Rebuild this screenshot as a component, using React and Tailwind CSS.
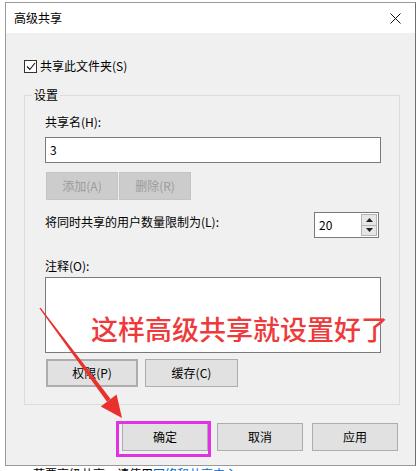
import React from "react";

const Btn = ({ children, className = "" }) => (
  <button
    type="button"
    className={`h-[28px] flex items-center justify-center text-[12px] leading-[16px] text-black bg-[#e1e1e1] border border-[#adadad] ${className}`}
  >
    {children}
  </button>
);

const DisabledBtn = ({ children }) => (
  <button
    type="button"
    className="w-[72px] h-[28px] flex items-center justify-center text-[12px] leading-[16px] text-[#9b9b9b] bg-[#cccccc] border border-[#c4c4c4]"
  >
    {children}
  </button>
);

const Spinner = () => (
  <div className="w-[65px] h-[26px] bg-white border border-[#7a7a7a] flex items-center justify-between pl-[4px] pr-[1px]">
    <span className="text-[12px] leading-[16px]">20</span>
    <div className="flex flex-col w-[16px] h-[22px]">
      <div className="flex-1 flex items-center justify-center bg-[#e6e6e6] border border-[#b4b4b4]">
        <svg width="7" height="4" viewBox="0 0 7 4">
          <path d="M0 4 L3.5 0 L7 4 Z" fill="#202020" />
        </svg>
      </div>
      <div className="flex-1 flex items-center justify-center bg-[#e6e6e6] border border-t-0 border-[#b4b4b4]">
        <svg width="7" height="4" viewBox="0 0 7 4">
          <path d="M0 0 L3.5 4 L7 0 Z" fill="#202020" />
        </svg>
      </div>
    </div>
  </div>
);

export default function App() {
  return (
    <div
      className="relative w-[418px] h-[471px] overflow-hidden bg-white text-black"
      style={{ fontFamily: '"Noto Sans CJK SC", "Noto Sans", sans-serif' }}
    >
      {/* dialog */}
      <div className="ml-[5px] mt-[2px] w-[411px] bg-[#f0f0f0] border border-[#9a9a9a] border-r-[#6e6e6e] flex flex-col">
        <div className="h-[30px] bg-white flex items-center justify-between pl-[8px] pr-[14px]">
          <span className="text-[12px] leading-[16px]">高级共享</span>
          <svg width="11" height="11" viewBox="0 0 11 11">
            <path d="M0.5 0.5 L10.5 10.5 M10.5 0.5 L0.5 10.5" stroke="#111" strokeWidth="1" />
          </svg>
        </div>

        <div className="mt-[25px] ml-[18px] flex items-center h-[16px]">
          <span className="w-[13px] h-[13px] border border-[#333] bg-white flex items-center justify-center">
            <svg width="10" height="9" viewBox="0 0 10 9">
              <path d="M1 4.5 L3.8 7.5 L9 1" fill="none" stroke="#111" strokeWidth="1.1" />
            </svg>
          </span>
          <span className="ml-[3px] text-[12px] leading-[16px]">共享此文件夹(S)</span>
        </div>

        {/* group box */}
        <div className="relative mt-[21px] ml-[18px] w-[376px] border border-[#dcdcdc] pt-[18px] pb-[17px] pl-[20px]">
          <span className="absolute -top-[9px] left-[7px] px-[2px] bg-[#f0f0f0] text-[12px] leading-[16px]">设置</span>

          <div className="text-[12px] leading-[16px]">共享名(H):</div>
          <div className="mt-[7px] w-[336px] h-[26px] bg-white border border-[#7a7a7a] flex items-center pl-[4px] text-[12px]">
            3
          </div>
          <div className="mt-[9px] flex gap-[1px] pl-[1px]">
            <DisabledBtn>添加(A)</DisabledBtn>
            <DisabledBtn>删除(R)</DisabledBtn>
          </div>

          <div className="mt-[12px] w-[334px] flex justify-between items-start">
            <span className="mt-[2px] text-[12px] leading-[16px]">将同时共享的用户数量限制为(L):</span>
            <Spinner />
          </div>

          <div className="mt-[20px] text-[12px] leading-[16px]">注释(O):</div>
          <div className="mt-[3px] w-[336px] h-[76px] bg-white border border-[#7a7a7a]" />

          <div className="mt-[6px] flex gap-[7px] pl-[1px]">
            <Btn className="w-[92px] border-2 border-[#0078d7]">权限(P)</Btn>
            <Btn className="w-[93px]">缓存(C)</Btn>
          </div>
        </div>

        <div className="mt-[18px] pb-[14px] pr-[17px] flex justify-end gap-[9px]">
          <div className="relative">
            <Btn className="w-[86px]">确定</Btn>
            <span className="absolute -left-[6px] -right-[3px] -top-[2px] -bottom-[6px] border-[3px] border-[#e233e2]" />
          </div>
          <Btn className="w-[86px]">取消</Btn>
          <Btn className="w-[86px]">应用</Btn>
        </div>
      </div>

      {/* window behind */}
      <div className="pl-[33px] text-[12px] leading-[16px] whitespace-nowrap">
        若要高级共享，请使用<span className="text-[#0066cc]">网络和共享中心</span>。
      </div>

      {/* annotations */}
      <div className="absolute inset-0 pointer-events-none">
        <span className="absolute left-[91px] top-[311px] text-[27px] leading-[36px] font-medium text-[#ee3a3a] whitespace-nowrap">
          这样高级共享就设置好了
        </span>
        <svg className="absolute left-0 top-0" width="418" height="471" viewBox="0 0 418 471">
          <polygon points="39.4,308.3 40.6,307.7 110.6,399 107,401.7" fill="#e8302c" />
          <polygon points="122,418 100.8,406.4 116.6,394.4" fill="#e8302c" />
        </svg>
      </div>
    </div>
  );
}
